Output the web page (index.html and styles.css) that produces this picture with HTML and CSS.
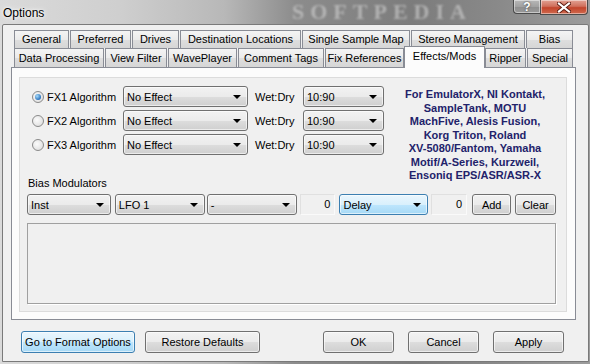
FILE: index.html
```html
<!DOCTYPE html>
<html lang="en">
  <head>
    <meta charset="UTF-8" />
    <title>Options</title>
    <link rel="stylesheet" href="styles.css">
  </head>
  <body>
    <div class="window">
      <div class="titlebar">
        <span class="title">Options</span>
        <span class="watermark">SOFTPEDIA</span>
        <div class="caption">
          <span class="cap help">?</span>
          <span class="cap close">
            <svg width="14" height="11" viewBox="0 0 14 11">
              <path d="M2 1.5 L12 9.5 M12 1.5 L2 9.5" stroke="#5a1a10" stroke-width="4" stroke-linecap="square" />
              <path d="M2 1.5 L12 9.5 M12 1.5 L2 9.5" stroke="#fff" stroke-width="2.2" stroke-linecap="square" />
            </svg>
          </span>
        </div>
      </div>
      <div class="client">
        <div class="tabs">
          <div class="tab-row back">
            <span class="tab">General</span>
            <span class="tab">Preferred</span>
            <span class="tab">Drives</span>
            <span class="tab">Destination Locations</span>
            <span class="tab">Single Sample Map</span>
            <span class="tab">Stereo Management</span>
            <span class="tab">Bias</span>
          </div>
          <div class="tab-row front">
            <span class="tab">Data Processing</span>
            <span class="tab">View Filter</span>
            <span class="tab">WavePlayer</span>
            <span class="tab">Comment Tags</span>
            <span class="tab">Fix References</span>
            <span class="tab active">Effects/Mods</span>
            <span class="tab">Ripper</span>
            <span class="tab">Special</span>
          </div>
        </div>
        <div class="tab-panel">
          <div class="page">
            <div class="fx-section">
              <div class="fx-list">
                <div class="fx-row">
                  <span class="radio checked"></span>
                  <span class="fx-label">FX1 Algorithm</span>
                  <div class="combo effect">No Effect</div>
                  <span class="wet">Wet:Dry</span>
                  <div class="combo ratio">10:90</div>
                </div>
                <div class="fx-row">
                  <span class="radio"></span>
                  <span class="fx-label">FX2 Algorithm</span>
                  <div class="combo effect">No Effect</div>
                  <span class="wet">Wet:Dry</span>
                  <div class="combo ratio">10:90</div>
                </div>
                <div class="fx-row">
                  <span class="radio"></span>
                  <span class="fx-label">FX3 Algorithm</span>
                  <div class="combo effect">No Effect</div>
                  <span class="wet">Wet:Dry</span>
                  <div class="combo ratio">10:90</div>
                </div>
              </div>
              <p class="note">
                For EmulatorX, NI Kontakt,<br />
                SampleTank, MOTU<br />
                MachFive, Alesis Fusion,<br />
                Korg Triton, Roland<br />
                XV-5080/Fantom, Yamaha<br />
                Motif/A-Series, Kurzweil,<br />
                Ensoniq EPS/ASR/ASR-X
              </p>
            </div>
            <div class="section-label">Bias Modulators</div>
            <div class="mod-row">
              <div class="combo inst">Inst</div>
              <div class="combo lfo">LFO 1</div>
              <div class="combo dash">-</div>
              <span class="num">0</span>
              <div class="combo delay hot">Delay</div>
              <span class="num num-2">0</span>
              <button class="btn add">Add</button>
              <button class="btn clear">Clear</button>
            </div>
            <div class="listbox"></div>
          </div>
        </div>
        <div class="footer">
          <button class="btn wide hot">Go to Format Options</button>
          <button class="btn wide restore">Restore Defaults</button>
          <button class="btn small ok">OK</button>
          <button class="btn small">Cancel</button>
          <button class="btn small">Apply</button>
        </div>
      </div>
    </div>
  </body>
</html>
```

FILE: styles.css
```css
* {
  margin: 0;
  padding: 0;
  box-sizing: border-box;
}
body {
  background: #9a9a9a;
  font-family: "Liberation Sans", Arial, sans-serif;
  font-size: 11px;
  color: #000;
}
.window {
  position: relative;
  width: 590px;
  height: 364px;
  overflow: hidden;
  background: linear-gradient(
    90deg,
    #dadada 0%,
    #cfcfcf 20%,
    #b8b8b8 38%,
    #8c8c8c 50%,
    #7c7c7c 70%,
    #8a8a8a 85%,
    #9c9c9c 100%
  );
}

/* title bar */
.titlebar {
  position: relative;
  display: flex;
  height: 24px;
}
.title {
  padding: 6px 0 0 3px;
  font-size: 12px;
  text-shadow: 0 0 6px #fff, 0 0 3px #fff;
}
.watermark {
  position: absolute;
  left: 292px;
  top: 0;
  font-family: "Liberation Serif", serif;
  font-weight: bold;
  font-size: 22px;
  line-height: 24px;
  letter-spacing: 6px;
  color: rgba(225, 225, 225, 0.5);
  filter: blur(1px);
}
.caption {
  display: flex;
  margin-left: auto;
  margin-right: 2px;
  align-items: flex-start;
}
.cap {
  display: flex;
  justify-content: center;
  align-items: center;
  height: 15px;
  border: 1px solid #4a4a4a;
  border-top: none;
  box-shadow: inset 0 0 0 1px rgba(255, 255, 255, 0.45);
}
.help {
  width: 27px;
  height: 14px;
  border-radius: 0 0 0 4px;
  border-right: none;
  background: linear-gradient(#b8b8b8, #a2a2a2 50%, #8e8e8e 51%, #9a9a9a);
  color: #fff;
  font-weight: bold;
  font-size: 12px;
  text-shadow: 0 0 2px #333;
}
.close {
  width: 48px;
  border-radius: 0 0 4px 0;
  background: linear-gradient(#e2a294, #d0705c 45%, #c2442b 55%, #d06a4e);
}

/* client area */
.client {
  width: 587px;
  height: 338px;
  margin-left: 2px;
  border: 1px solid #7a7a7a;
  border-radius: 2px 2px 0 0;
  background: #f0f0f0;
}
.tabs {
  width: 560px;
  margin: 5px 0 0 11px;
}
.tab-row {
  display: flex;
  gap: 1px;
  height: 18px;
}
.tab-row.front {
  height: 19px;
}
.tab {
  flex: 0 0 auto;
  border: 1px solid #898c95;
  border-bottom: none;
  background: linear-gradient(#f4f4f4, #ebebeb 50%, #dedede 51%, #d6d6d6);
  text-align: center;
  line-height: 16px;
  white-space: nowrap;
}
.back .tab:nth-child(1) { width: 55px; }
.back .tab:nth-child(2) { width: 61px; }
.back .tab:nth-child(3) { width: 47px; }
.back .tab:nth-child(4) { width: 121px; }
.back .tab:nth-child(5) { width: 108px; }
.back .tab:nth-child(6) { width: 114px; }
.back .tab:nth-child(7) { width: 47px; }
.front .tab {
  line-height: 18px;
}
.front .tab:nth-child(1) { width: 90px; }
.front .tab:nth-child(2) { width: 62px; }
.front .tab:nth-child(3) { width: 69px; }
.front .tab:nth-child(4) { width: 86px; }
.front .tab:nth-child(5) { width: 79px; }
.front .tab:nth-child(6) { width: 81px; }
.front .tab:nth-child(7) { width: 41px; }
.front .tab:nth-child(8) { width: 46px; }
.front .tab.active {
  position: relative;
  z-index: 1;
  height: 22px;
  margin: -2px -1px -1px;
  background: #fcfcfc;
  line-height: 18px;
}
.tab-panel {
  width: 565px;
  height: 253px;
  margin-left: 8px;
  padding: 9px 8px 7px 7px;
  border: 1px solid #898c95;
  background: #fcfcfc;
}
.page {
  height: 235px;
  padding: 8px 10px 7px 7px;
  border: 1px solid #dcdcdc;
  background: #f0f0f0;
}

/* fx rows */
.fx-section {
  display: flex;
  height: 91px;
}
.fx-list {
  display: flex;
  flex-direction: column;
  gap: 3px;
  padding-left: 5px;
}
.fx-row {
  display: flex;
  align-items: center;
  height: 21px;
}
.radio {
  width: 12px;
  height: 12px;
  margin-right: 3px;
  border: 1px solid #8a8a8a;
  border-radius: 50%;
  background: radial-gradient(circle at 40% 40%, #fbfbfb, #d8d8d8);
  display: flex;
  justify-content: center;
  align-items: center;
}
.radio.checked::after {
  content: "";
  width: 6px;
  height: 6px;
  border-radius: 50%;
  background: radial-gradient(circle at 35% 35%, #a8dcfa, #2a72bd 70%, #1a4f94);
}
.fx-label {
  width: 76px;
}
.wet {
  width: 48px;
  margin-left: 7px;
}
.note {
  width: 150px;
  margin: 2px 0 0 16px;
  color: #22226a;
  font-weight: bold;
  line-height: 13.5px;
  text-align: center;
  white-space: nowrap;
}

/* combos and buttons */
.combo {
  display: flex;
  align-items: center;
  height: 21px;
  padding: 0 6px 0 3px;
  border: 1px solid #707070;
  border-radius: 3px;
  background: linear-gradient(#f2f2f2, #ebebeb 50%, #dddddd 51%, #cfcfcf);
  box-shadow: inset 0 0 0 1px rgba(255, 255, 255, 0.6);
  white-space: nowrap;
}
.combo::after {
  content: "";
  margin-left: auto;
  border-top: 4px solid #000;
  border-left: 4px solid transparent;
  border-right: 4px solid transparent;
}
.hot {
  border-color: #3c7fb1;
  background: linear-gradient(#eaf6fd, #d9f0fc 50%, #bee6fd 51%, #a7d9f5);
}
.effect {
  width: 125px;
}
.ratio {
  width: 81px;
}
.section-label {
  padding-left: 1px;
  line-height: 13px;
}
.mod-row {
  display: flex;
  align-items: center;
  height: 21px;
  margin-top: 4px;
}
.inst {
  width: 84px;
  margin-right: 4px;
}
.lfo {
  width: 90px;
  margin-right: 2px;
}
.dash {
  width: 90px;
  margin-right: 3px;
}
.delay {
  width: 89px;
  margin-right: 3px;
}
.num {
  width: 36px;
  height: 21px;
  margin-right: 4px;
  padding-right: 4px;
  border: 1px solid #e0e0e0;
  border-right-color: #fafafa;
  border-bottom-color: #fafafa;
  text-align: right;
  line-height: 18px;
}
.num-2 {
  margin-right: 5px;
}
.btn {
  height: 21px;
  border: 1px solid #707070;
  border-radius: 3px;
  background: linear-gradient(#f2f2f2, #ebebeb 50%, #dddddd 51%, #cfcfcf);
  box-shadow: inset 0 0 0 1px rgba(255, 255, 255, 0.6);
  font-family: "Liberation Sans", Arial, sans-serif;
  font-size: 11px;
  color: #000;
}
.btn.hot {
  border-color: #3c7fb1;
  background: linear-gradient(#eaf6fd, #d9f0fc 50%, #bee6fd 51%, #a7d9f5);
}
.add {
  width: 39px;
  margin-right: 4px;
}
.clear {
  width: 41px;
}
.listbox {
  height: 81px;
  margin-top: 8px;
  border: 1px solid #a0a0a0;
  box-shadow: 1px 1px 0 #fff;
  background: #f0f0f0;
}

/* footer */
.footer {
  display: flex;
  gap: 14px;
  padding: 11px 24px 0 18px;
}
.footer .btn {
  height: 22px;
}
.wide {
  width: 114px;
}
.restore {
  width: 115px;
  margin-left: -4px;
}
.small {
  width: 71px;
}
.ok {
  margin-left: auto;
}
```
